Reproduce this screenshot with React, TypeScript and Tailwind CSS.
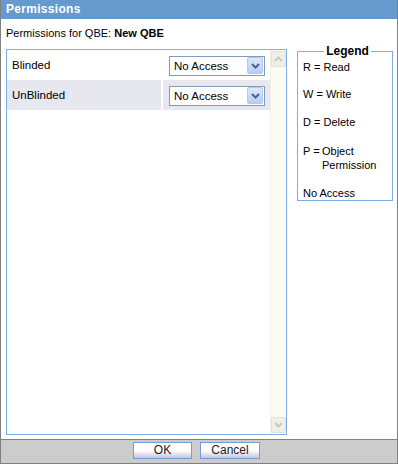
import React from "react";

function Chevron({ up = false, color = "#4d6185" }: { up?: boolean; color?: string }) {
  return (
    <svg width="9" height="6" viewBox="0 0 9 6" className="block">
      <path
        d={up ? "M1 5 L4.5 1.5 L8 5" : "M1 1 L4.5 4.5 L8 1"}
        fill="none"
        stroke={color}
        strokeWidth="2"
      />
    </svg>
  );
}

function Select() {
  return (
    <div className="w-[96px] h-[20px] border border-[#7f9db9] bg-white flex items-start">
      <div className="flex-1 pl-[4px] leading-[18px] text-[11.5px] text-black">No Access</div>
      <div className="mr-[1px] w-[16px] h-[17px] rounded-[2px] border border-[#b4c6f2] bg-gradient-to-b from-[#dde7fe] to-[#b9cbf8] flex items-center justify-center">
        <Chevron />
      </div>
    </div>
  );
}

function Row({ label, shaded }: { label: string; shaded?: boolean }) {
  const bg = shaded ? "bg-[#e7e7ef]" : "bg-white";
  return (
    <div className="flex h-[30px]">
      <div className={`w-[154px] ${bg} pl-[5px] leading-[30px] text-[11.5px] text-black`}>{label}</div>
      <div className="w-[2px] bg-white" />
      <div className={`w-[107px] ${bg} pl-[6px] pt-[6px]`}>
        <Select />
      </div>
    </div>
  );
}

function ScrollBtn({ up }: { up?: boolean }) {
  return (
    <div className="w-[15px] h-[16px] bg-[#efefe7] border border-[#e2e2da] rounded-[1px] flex items-center justify-center">
      <Chevron up={up} color="#c9c9c1" />
    </div>
  );
}

export default function App() {
  return (
    <div className="w-[398px] h-[464px] border-x border-b border-[#808080] flex flex-col bg-white font-['Liberation_Sans',Arial,sans-serif] text-black">
      <div className="h-[19px] bg-[#6699cc] text-white font-bold text-[12px] leading-[19px] pl-[5px] tracking-[0.3px]">
        Permissions
      </div>
      <div className="flex-1 pl-[5px]">
        <div className="mt-[8px] h-[13px] leading-[13px] text-[11px]">
          Permissions for QBE: <span className="font-bold">New QBE</span>
        </div>
        <div className="mt-[9px] flex items-start">
          <div className="w-[281px] h-[386px] border border-[#7ab0ec] flex">
            <div className="flex-1 flex flex-col">
              <Row label="Blinded" />
              <Row label="UnBlinded" shaded />
            </div>
            <div className="w-[16px] bg-[#fbfbf3] border-l border-[#f0f0e6] flex flex-col justify-between py-[1px]">
              <ScrollBtn up />
              <ScrollBtn />
            </div>
          </div>
          <fieldset className="ml-[10px] -mt-[5px] w-[96px] h-[157px] border border-[#7ab0ec] pl-[5px] pt-[2px] text-[11px]">
            <legend className="mx-auto px-[2px] font-bold text-[12px] leading-[14px]">Legend</legend>
            <div className="leading-[14px]">R = Read</div>
            <div className="leading-[14px] mt-[13px]">W = Write</div>
            <div className="leading-[14px] mt-[14px]">D = Delete</div>
            <div className="leading-[14px] mt-[15px] flex">
              <span className="w-[19px] shrink-0">P =</span>
              <span>
                Object
                <br />
                Permission
              </span>
            </div>
            <div className="leading-[14px] mt-[14px]">No Access</div>
          </fieldset>
        </div>
      </div>
      <div className="h-[24px] border-t border-[#808080] bg-[#cccccc] flex justify-center items-start pt-[2px] gap-[8px] pr-[5px]">
        <button className="w-[59px] h-[17px] border border-[#6f9ed8] bg-gradient-to-b from-white via-white via-50% to-[#c6c6da] text-[12px] leading-[15px] text-[#222]">
          OK
        </button>
        <button className="w-[60px] h-[17px] border border-[#6f9ed8] bg-gradient-to-b from-white via-white via-50% to-[#c6c6da] text-[12px] leading-[15px] text-[#222]">
          Cancel
        </button>
      </div>
    </div>
  );
}
